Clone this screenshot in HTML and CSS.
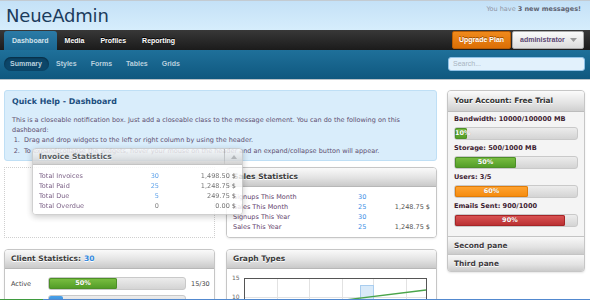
FILE: index.html
```html
<!DOCTYPE html>
<html>
<head>
<meta charset="utf-8">
<link rel="stylesheet" href="styles.css">
</head>
<body>
<header class="top">
  <div class="logo">NeueAdmin</div>
  <div class="msg">You have <b>3 new messages!</b></div>
</header>
<nav class="mainnav">
  <ul class="tabs">
    <li class="tab active">Dashboard</li>
    <li class="tab">Media</li>
    <li class="tab">Profiles</li>
    <li class="tab">Reporting</li>
  </ul>
  <div class="navright">
    <span class="upgrade">Upgrade Plan</span>
    <span class="user">administrator<svg class="caret" width="7" height="4" viewBox="0 0 7 4"><path d="M0 0H7L3.5 4Z" fill="#9a9a9a"/></svg></span>
  </div>
</nav>
<div class="subnav">
  <ul class="subtabs">
    <li class="sub active">Summary</li>
    <li class="sub">Styles</li>
    <li class="sub">Forms</li>
    <li class="sub">Tables</li>
    <li class="sub">Grids</li>
  </ul>
  <div class="search">Search...</div>
</div>
<main class="main">
  <div class="content">
    <div class="notice">
      <h2 class="notice-title">Quick Help - Dashboard</h2>
      <p class="notice-text">This is a closeable notification box. Just add a closeable class to the message element. You can do the following on this dashboard:</p>
      <ol class="notice-list">
        <li>Drag and drop widgets to the left or right column by using the header.</li>
        <li>To expand/collapse the widgets, hover your mouse on the header and an expand/collapse button will appear.</li>
      </ol>
    </div>
    <div class="cols">
      <div class="col">
        <div class="placeholder"></div>
        <section class="widget">
          <div class="whead">Client Statistics: <span class="blue">30</span></div>
          <div class="wbody client">
            <div class="crow">
              <span class="clabel">Active</span>
              <div class="bar cbar"><div class="fill green" style="width:50%">50%</div></div>
              <span class="cval">15/30</span>
            </div>
            <div class="crow">
              <span class="clabel"></span>
              <div class="bar cbar"><div class="fill bluefill" style="width:10%"></div></div>
            </div>
          </div>
        </section>
      </div>
      <div class="col">
        <section class="widget sales">
          <div class="whead">Sales Statistics</div>
          <div class="wbody stats sales-grid">
            <span class="lbl">Signups This Month</span><span class="num">30</span><span class="amt"></span>
            <span class="lbl">Sales This Month</span><span class="num">25</span><span class="amt">1,248.75 $</span>
            <span class="lbl">Signups This Year</span><span class="num">30</span><span class="amt"></span>
            <span class="lbl">Sales This Year</span><span class="num">25</span><span class="amt">1,248.75 $</span>
          </div>
        </section>
        <section class="widget graph">
          <div class="whead">Graph Types</div>
          <div class="wbody chart">
            <svg width="209" height="40" viewBox="0 0 209 40">
              <text x="5" y="11" class="axis">15</text>
              <text x="5" y="30" class="axis">10</text>
              <g stroke="#e2e2e2" stroke-width="1">
                <line x1="50.5" y1="9" x2="50.5" y2="40"/>
                <line x1="82.5" y1="9" x2="82.5" y2="40"/>
                <line x1="115.5" y1="9" x2="115.5" y2="40"/>
                <line x1="146.5" y1="9" x2="146.5" y2="40"/>
                <line x1="179.5" y1="9" x2="179.5" y2="40"/>
                <line x1="17" y1="28.5" x2="200" y2="28.5"/>
              </g>
              <rect x="133.5" y="16.5" width="13" height="30" fill="#d9eaf9" stroke="#a9cdef"/>
              <line x1="100" y1="33.2" x2="199" y2="21" stroke="#4aa54a" stroke-width="1.3"/>
              <rect x="17.5" y="9.5" width="182" height="40" fill="none" stroke="#555" stroke-width="1"/>
            </svg>
          </div>
        </section>
      </div>
    </div>
    <section class="widget dragging">
      <div class="whead">Invoice Statistics<span class="wbtn"><svg width="6" height="4" viewBox="0 0 6 4"><path d="M0 4L3 0L6 4Z" fill="#aaa"/></svg></span></div>
      <div class="wbody stats inv-grid">
        <span class="lbl">Total Invoices</span><span class="num">30</span><span class="amt">1,498.50 $</span>
        <span class="lbl">Total Paid</span><span class="num">25</span><span class="amt">1,248.75 $</span>
        <span class="lbl">Total Due</span><span class="num">5</span><span class="amt">249.75 $</span>
        <span class="lbl">Total Overdue</span><span class="num zero">0</span><span class="amt">0.00 $</span>
      </div>
    </section>
  </div>
  <aside class="sidebar">
    <section class="panel">
      <div class="phead">Your Account: Free Trial</div>
      <div class="pbody">
        <div class="plabel">Bandwidth: 10000/100000 MB</div>
        <div class="bar"><div class="fill green" style="width:10%">10%</div></div>
        <div class="plabel">Storage: 500/1000 MB</div>
        <div class="bar"><div class="fill green" style="width:50%">50%</div></div>
        <div class="plabel">Users: 3/5</div>
        <div class="bar"><div class="fill orange" style="width:60%">60%</div></div>
        <div class="plabel">Emails Sent: 900/1000</div>
        <div class="bar"><div class="fill red" style="width:90%">90%</div></div>
      </div>
      <div class="pane">Second pane</div>
      <div class="pane last">Third pane</div>
    </section>
  </aside>
</main>
<div class="frame"><span class="frame-green"></span></div>
</body>
</html>
```
FILE: styles.css
```css
* { box-sizing: border-box; }
html, body { margin: 0; padding: 0; }
body {
  width: 590px;
  height: 300px;
  overflow: hidden;
  position: relative;
  background: #fff;
  font-family: "DejaVu Sans", Verdana, sans-serif;
  font-size: 6.5px;
  color: #444;
}
ul, ol { margin: 0; padding: 0; list-style: none; }

/* header */
.top {
  height: 30px;
  border-top: 1px solid #c3cbd2;
  background: linear-gradient(#c4e1f7, #d6edfc);
  display: flex;
  justify-content: space-between;
  padding: 0 9px 0 6px;
}
.logo {
  font-size: 18px;
  color: #1b3b5c;
  line-height: 29px;
  letter-spacing: -0.2px;
}
.msg {
  margin-top: 4px;
  font-size: 6.5px;
  color: #8f95a5;
}
.msg b { color: #5e6270; }

/* main nav */
.mainnav {
  height: 20px;
  background: linear-gradient(#383838, #1b1b1b);
  display: flex;
  justify-content: space-between;
  align-items: stretch;
  padding: 1px 6px 1px 4px;
  font-family: "Liberation Sans", Arial, sans-serif;
  font-weight: bold;
  font-size: 7px;
}
.tabs { display: flex; }
.tab {
  padding: 0 8px;
  color: #fff;
  line-height: 19px;
  text-shadow: 0 -1px 0 #000;
}
.tab.active {
  background: linear-gradient(#2b7ba7, #1a6690);
  color: #d2e2ec;
  border-radius: 3px 3px 0 0;
  text-shadow: none;
  margin-bottom: -1px;
  line-height: 20px;
}
.navright { display: flex; gap: 1px; }
.upgrade {
  width: 59px;
  background: linear-gradient(#f08a1c, #dc6f06);
  border: 1px solid #b85c04;
  border-radius: 2px;
  color: #fff;
  text-align: center;
  line-height: 16px;
  text-shadow: 0 -1px 0 #9a4a00;
}
.user {
  width: 72px;
  background: linear-gradient(#fafafa, #dcdcdc);
  border: 1px solid #aaa;
  border-radius: 2px;
  color: #5b4772;
  line-height: 16px;
  padding-left: 7px;
  display: flex;
  align-items: center;
  justify-content: space-between;
  padding-right: 6px;
}
.caret { display: block; }

/* sub nav */
.subnav {
  height: 30px;
  background: linear-gradient(#1f709a, #0f587f);
  border-bottom: 1px solid #b9c3c9;
  display: flex;
  justify-content: space-between;
  padding: 7px 5px 0 4px;
  font-family: "Liberation Sans", Arial, sans-serif;
  font-weight: bold;
  font-size: 7px;
}
.subtabs { display: flex; height: 14px; }
.sub {
  padding: 0 7px;
  color: #b9d0de;
  line-height: 14px;
}
.sub.active {
  background: #0c4669;
  border-radius: 7px;
  box-shadow: inset 0 1px 2px rgba(0,0,0,0.4);
  padding: 0 6px;
  width: 45px;
}
.search {
  width: 137px;
  height: 14px;
  background: #e2f1fc;
  border: 1px solid #8fc1e6;
  border-radius: 3px;
  color: #a9b4c0;
  font-weight: normal;
  line-height: 12px;
  padding-left: 4px;
}

/* main */
.main {
  display: flex;
  gap: 10px;
  padding: 10px 5px 0 4px;
}
.content {
  width: 433px;
  position: relative;
}
.sidebar { width: 138px; }

.notice {
  height: 71px;
  background: #d9edfb;
  border: 1px solid #bfdff5;
  border-radius: 3px;
  padding: 5px 7px 0 7px;
  color: #5d4e70;
}
.notice-title {
  margin: 0 0 7px 0;
  font-size: 7.9px;
  font-weight: bold;
  color: #1d4f7f;
  line-height: 12px;
}
.notice-text {
  margin: 0;
  line-height: 10px;
}
.notice-list {
  list-style: decimal;
  padding-left: 10px;
  margin-top: 0;
}
.notice-list li { line-height: 11px; padding-left: 2px; }

.cols {
  display: grid;
  grid-template-columns: 211px 211px;
  gap: 11px;
  margin-top: 6px;
}
.col { display: flex; flex-direction: column; gap: 11px; }
.placeholder {
  height: 71px;
  border: 1px dotted #cfcfcf;
}

/* widgets */
.widget {
  border: 1px solid #c6c6c6;
  border-radius: 4px;
  background: #fff;
  box-shadow: 0 1px 2px rgba(0,0,0,0.08);
  overflow: hidden;
}
.whead {
  height: 19px;
  background: linear-gradient(#fafafa, #e2e2e2 55%, #c9c9c9);
  border-bottom: 1px solid #b7b7b7;
  font-weight: bold;
  font-size: 7.5px;
  color: #3b3b3b;
  line-height: 18px;
  padding-left: 6px;
  text-shadow: 0 1px 0 #fff;
  display: flex;
}
.blue { color: #3288e0; margin-left: 3px; }
.wbody { background: #fff; }

.stats {
  display: grid;
  padding: 5px 6px 6px 6px;
  line-height: 10px;
}
.lbl { color: #5f3f6c; }
.num { color: #3b8ee6; }
.num.zero { color: #666; }
.amt { color: #555; text-align: right; }
.sales { height: 71px; }
.sales-grid { grid-template-columns: 125px 1fr auto; }

.dragging {
  position: absolute;
  left: 28px;
  top: 58px;
  width: 211px;
  height: 67px;
  opacity: 0.82;
  box-shadow: 0 2px 6px rgba(0,0,0,0.25);
}
.dragging .whead { height: 16px; line-height: 15px; justify-content: space-between; padding-right: 0; }
.wbtn {
  width: 18px;
  border-left: 1px solid #bbb;
  display: flex;
  align-items: center;
  justify-content: center;
}
.inv-grid { grid-template-columns: 100px 20px 1fr; padding-top: 6px; }
.inv-grid .num { text-align: right; }

/* client */
.client { padding: 8px 0 0 6px; display: flex; flex-direction: column; gap: 5px; height: 40px; }
.crow { display: flex; align-items: center; }
.clabel { width: 37px; color: #444; }
.cbar { width: 138px; }
.cval { margin-left: 5px; color: #444; }

/* bars */
.bar {
  height: 13px;
  border: 1px solid #c9c9c9;
  border-radius: 3px;
  background: linear-gradient(#ececec, #d4d4d4);
  overflow: visible;
}
.fill {
  height: 100%;
  border-radius: 2px;
  color: #fff;
  font-weight: bold;
  font-size: 6.5px;
  line-height: 11px;
  text-align: center;
  white-space: nowrap;
  text-shadow: 0 0 1px rgba(0,0,0,0.3);
}
.green { background: linear-gradient(#7cc043, #4f9a25); box-shadow: inset 0 0 0 1px #4d8f28; }
.orange { background: linear-gradient(#ffa433, #f58a0c); box-shadow: inset 0 0 0 1px #e07c08; }
.red { background: linear-gradient(#dc5555, #b72d2f); box-shadow: inset 0 0 0 1px #a52527; }
.bluefill { background: linear-gradient(#4aa0e8, #2a7fcf); }

/* chart */
.graph { height: 60px; }
.chart svg { display: block; }
.axis { font-size: 6px; fill: #666; font-family: "DejaVu Sans", sans-serif; }

/* sidebar panel */
.panel {
  border: 1px solid #c6c6c6;
  border-radius: 4px;
  overflow: hidden;
  background: #f4f4f4;
  box-shadow: 0 1px 2px rgba(0,0,0,0.1);
}
.phead {
  height: 21px;
  background: linear-gradient(#fbfbfb, #e3e3e3 60%, #cfcfcf);
  border-bottom: 1px solid #bcbcbc;
  font-weight: bold;
  font-size: 7.4px;
  color: #333;
  line-height: 19px;
  padding-left: 6px;
  text-shadow: 0 1px 0 #fff;
}
.pbody { padding: 2px 6px 6px 6px; }
.plabel {
  font-weight: bold;
  font-size: 6.6px;
  color: #3c2030;
  line-height: 10px;
  margin-bottom: 3px;
}
.pbody .bar { margin-bottom: 3px; height: 13px; }
.pane {
  height: 18px;
  background: linear-gradient(#f8f8f8, #e2e2e2 60%, #cbcbcb);
  border-top: 1px solid #c4c4c4;
  font-weight: bold;
  font-size: 7.4px;
  color: #403a40;
  line-height: 17px;
  padding-left: 6px;
  text-shadow: 0 1px 0 #fff;
}
.pane.last { height: 17px; }

/* screenshot frame line */
.frame {
  position: absolute;
  left: 0;
  right: 0;
  bottom: 0;
  height: 1px;
  background: #5289cf;
}
.frame-green {
  display: block;
  width: 43px;
  height: 1px;
  background: #3f9b3f;
}
```
